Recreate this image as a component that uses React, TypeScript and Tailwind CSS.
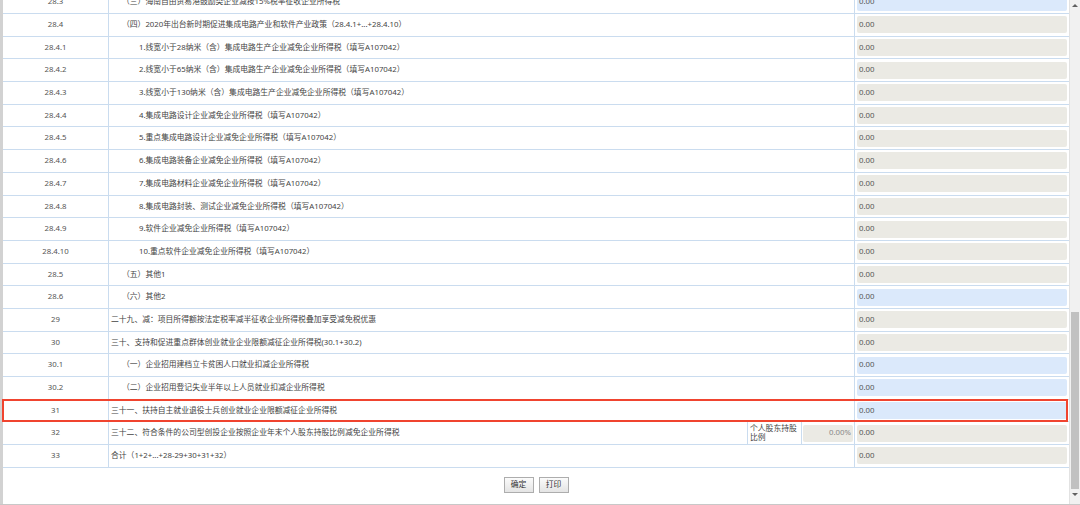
import React from "react";

type Row = {
  no: string;
  text: string;
  level: 0 | 1 | 2;
  tone: "blue" | "gray";
};

const rows: Row[] = [
  { no: "28.3", text: "（三）海南自由贸易港鼓励类企业减按15%税率征收企业所得税", level: 1, tone: "blue" },
  { no: "28.4", text: "（四）2020年出台新时期促进集成电路产业和软件产业政策（28.4.1+...+28.4.10）", level: 1, tone: "gray" },
  { no: "28.4.1", text: "1.线宽小于28纳米（含）集成电路生产企业减免企业所得税（填写A107042）", level: 2, tone: "gray" },
  { no: "28.4.2", text: "2.线宽小于65纳米（含）集成电路生产企业减免企业所得税（填写A107042）", level: 2, tone: "gray" },
  { no: "28.4.3", text: "3.线宽小于130纳米（含）集成电路生产企业减免企业所得税（填写A107042）", level: 2, tone: "gray" },
  { no: "28.4.4", text: "4.集成电路设计企业减免企业所得税（填写A107042）", level: 2, tone: "gray" },
  { no: "28.4.5", text: "5.重点集成电路设计企业减免企业所得税（填写A107042）", level: 2, tone: "gray" },
  { no: "28.4.6", text: "6.集成电路装备企业减免企业所得税（填写A107042）", level: 2, tone: "gray" },
  { no: "28.4.7", text: "7.集成电路材料企业减免企业所得税（填写A107042）", level: 2, tone: "gray" },
  { no: "28.4.8", text: "8.集成电路封装、测试企业减免企业所得税（填写A107042）", level: 2, tone: "gray" },
  { no: "28.4.9", text: "9.软件企业减免企业所得税（填写A107042）", level: 2, tone: "gray" },
  { no: "28.4.10", text: "10.重点软件企业减免企业所得税（填写A107042）", level: 2, tone: "gray" },
  { no: "28.5", text: "（五）其他1", level: 1, tone: "gray" },
  { no: "28.6", text: "（六）其他2", level: 1, tone: "blue" },
  { no: "29", text: "二十九、减：项目所得额按法定税率减半征收企业所得税叠加享受减免税优惠", level: 0, tone: "gray" },
  { no: "30", text: "三十、支持和促进重点群体创业就业企业限额减征企业所得税(30.1+30.2)", level: 0, tone: "gray" },
  { no: "30.1", text: "（一）企业招用建档立卡贫困人口就业扣减企业所得税", level: 1, tone: "blue" },
  { no: "30.2", text: "（二）企业招用登记失业半年以上人员就业扣减企业所得税", level: 1, tone: "blue" },
  { no: "31", text: "三十一、扶持自主就业退役士兵创业就业企业限额减征企业所得税", level: 0, tone: "blue" },
  { no: "32", text: "三十二、符合条件的公司型创投企业按照企业年末个人股东持股比例减免企业所得税", level: 0, tone: "gray" },
  { no: "33", text: "合计（1+2+...+28-29+30+31+32）", level: 0, tone: "gray" },
];

const indent = ["pl-[2px]", "pl-[13px]", "pl-[30px]"];

function Amount({ tone }: { tone: "blue" | "gray" }) {
  return (
    <div
      className={
        "mx-[2px] flex h-[17px] flex-1 items-center rounded-[2px] pl-[2px] text-[#555] " +
        (tone === "blue" ? "bg-[#dbe9fb]" : "bg-[#ebeae4]")
      }
    >
      0.00
    </div>
  );
}

function TableRow({ row }: { row: Row }) {
  return (
    <div className="relative flex h-[22.7px] shrink-0 border-b border-[#cadcef]">
      <div className="flex w-[106px] shrink-0 items-center justify-center border-r border-[#cadcef] text-[#555]">
        {row.no}
      </div>
      {row.no === "32" ? (
        <div className="flex w-[746px] shrink-0 border-r border-[#cadcef]">
          <div className={"flex flex-1 items-center border-r border-[#cadcef] " + indent[row.level]}>
            {row.text}
          </div>
          <div className="flex w-[54px] items-center border-r border-[#cadcef] pl-[2px] leading-[9px]">
            个人股东持股
            <br />
            比例
          </div>
          <div className="flex w-[52px] items-center">
            <div className="mx-[1px] flex h-[17px] flex-1 items-center justify-end rounded-[2px] bg-[#ebeae4] pr-[2px] text-[#888]">
              0.00%
            </div>
          </div>
        </div>
      ) : (
        <div className={"flex w-[746px] shrink-0 items-center border-r border-[#cadcef] " + indent[row.level]}>
          {row.text}
        </div>
      )}
      <div className="flex flex-1 items-center">
        <Amount tone={row.tone} />
      </div>
      {row.no === "31" && (
        <div className="pointer-events-none absolute -top-[0.5px] -left-px right-px -bottom-[0.5px] border-2 border-[#f0442f]" />
      )}
    </div>
  );
}

export default function App() {
  return (
    <div className="flex h-[505px] w-[1080px] overflow-hidden border-b border-[#c8c8c8] bg-white font-['Noto_Sans','Noto_Sans_CJK_SC',sans-serif] text-[7.8px] text-[#444]">
      <div className="w-[3px] shrink-0 bg-[#d2d2d2]" />
      <div className="flex w-[1066px] shrink-0 flex-col">
        <div className="mt-[-8.7px] flex flex-col">
          {rows.map((r) => (
            <TableRow key={r.no} row={r} />
          ))}
        </div>
        <div className="mt-[9.5px] flex justify-center gap-[5px]">
          <button className="h-[16px] w-[30px] border border-[#adadad] bg-gradient-to-b from-[#fbfbfb] to-[#e4e4e4] text-[7.8px] text-[#333]">
            确定
          </button>
          <button className="h-[16px] w-[30px] border border-[#adadad] bg-gradient-to-b from-[#fbfbfb] to-[#e4e4e4] text-[7.8px] text-[#333]">
            打印
          </button>
        </div>
      </div>
      <div className="flex w-[11px] shrink-0 flex-col items-center border-l border-[#e2e2e2] bg-[#f1f1f1]">
        <div className="mt-[4px] h-0 w-0 border-x-[3px] border-b-[3px] border-x-transparent border-b-[#606060]" />
        <div className="mt-[305px] h-[177px] w-[8px] bg-[#c1c1c1]" />
        <div className="mt-[4px] h-0 w-0 border-x-[3px] border-t-[3px] border-x-transparent border-t-[#606060]" />
      </div>
    </div>
  );
}
